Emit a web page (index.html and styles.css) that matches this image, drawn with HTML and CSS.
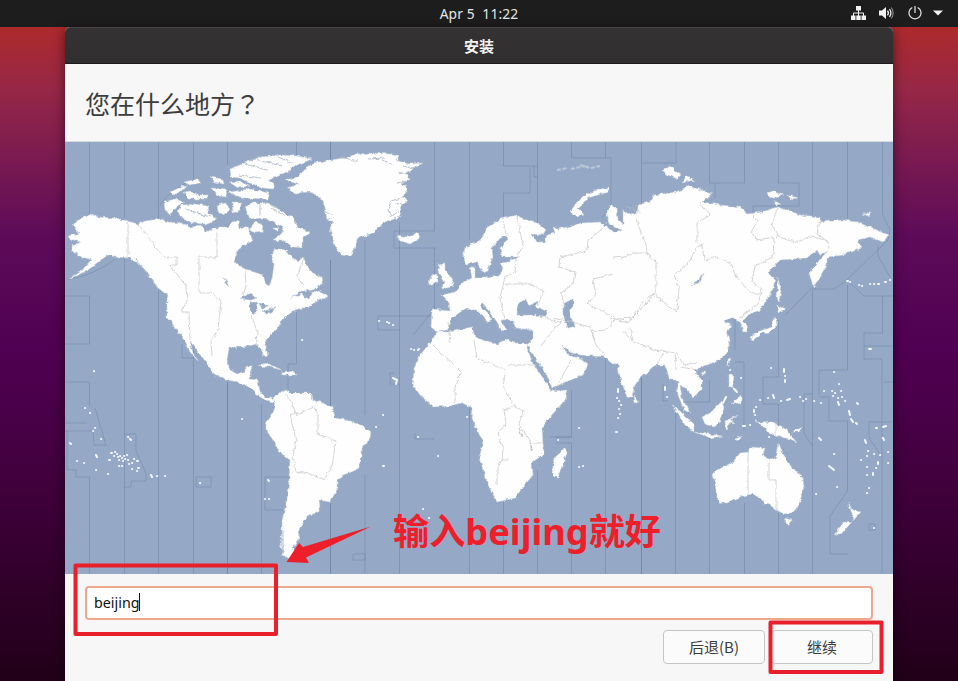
FILE: index.html
```html
<!DOCTYPE html>
<html lang="zh-CN">
<head>
<meta charset="utf-8">
<title>安装</title>
<link rel="stylesheet" href="styles.css">
</head>
<body>
<header class="topbar">
  <time class="clock">Apr 5&nbsp; 11:22</time>
  <div class="tray">
    <svg class="net" width="15" height="14" viewBox="0 0 15 14"><path fill="#f2f2f2" d="M5 0h5v4.500H5zM0 9.500h4.500V14H0zM5.300 9.500h4.400V14H5.300zM10.500 9.500H15V14h-4.500z"/><path fill="none" stroke="#f2f2f2" d="M7.500 4v6M2.500 10V7h10v3"/></svg>
    <svg class="vol" width="16" height="14" viewBox="0 0 16 14"><path fill="#f2f2f2" d="M0 4.500h3L7 1v12L3 9.500H0z"/><path fill="none" stroke="#f2f2f2" stroke-width="1.300" d="M8.500 4.700q1.800 2.300 0 4.600M10.500 3q2.800 4 0 8"/><path fill="none" stroke="#9d9d9d" d="M12.400 1.500q3.400 5.500 0 11"/></svg>
    <svg class="pow" width="14" height="14" viewBox="0 0 14 14"><path fill="none" stroke="#e8e8e8" stroke-width="1.200" d="M4.300 1.500a6 6 0 1 0 5.400 0M7 0v7"/></svg>
    <svg class="caret" width="10" height="6" viewBox="0 0 10 6"><path fill="#f2f2f2" d="M0 .5h10L5 5.500z"/></svg>
  </div>
</header>
<main class="window">
  <div class="titlebar">安装</div>
  <h1 class="heading">您在什么地方<span class="mark" lang="zh-TW">？</span></h1>
  <svg class="map" viewBox="65 142 828 432">
    <defs>
      <filter id="coast" x="-5%" y="-5%" width="110%" height="110%" color-interpolation-filters="sRGB">
        <feTurbulence type="fractalNoise" baseFrequency=".2" numOctaves="3" seed="4"/>
        <feDisplacementMap in="SourceGraphic" scale="4" xChannelSelector="R" yChannelSelector="G"/>
        <feGaussianBlur stdDeviation=".35"/>
      </filter>
    </defs>
    <path class="zones" d="M89.500 142V214M124.500 142V218M158.500 142V220M193.500 142V180M227.500 142V165M89.500 296V344M65 296H89.500M65 344H89.500M65 382H89.500V406M65 423H87M65 431H93L94 445H106L95 408M67 431V470H76V477H89.500V574M124.500 259V574M124.500 434H136V451L146 473V481H131V487H124.500M158.500 290V574M193.500 350V574M227.500 382V574M261.500 404V574M196 477H211V487H196ZM296.500 142V155M296.500 312V364H288V389M330.500 142V160M330.500 260V574M365 240V415M365 475V574M399.500 222V574M434.500 142V231H394V248H434.500V309L413 335M434.500 316H378V330H400M469.500 142V240M469.500 406V574M503.500 142V166H537.500V142M530 168V193H503.500V218M537.500 166V223M534 166V177H537.500M571.500 142V158H611V205L602 218M605.500 158V142M641.500 142V163H676V142M641.500 163V205M709.500 142V183H744.500V142M715 183V198M778.500 142V183H799V206H753V212M812.500 142V215M847.500 142V219M882.500 142V214L890 230L888 240L847 280L834 289H813M847 280L864 296H893M878 245L878 256L890 277M813 287L785 315M812.500 289V574M847.500 285V370H819V395M882.500 296V333H864V359H882V574M864 346H893M884 382H893M503.500 502V574M537.500 470V574M571.500 390V437H555M555 443H571.500V574M605.500 357V574M641.500 378V574M675.500 412V574M709.500 380V402H685M709.500 435V574M744.500 503V574M735 318V350M735 362H744V430M778.500 320V377H763V404H778.500V432M778.500 513V574M804 394V434L813 446M804 394H813M819 397H829V421H847.500V491L830 516V554H848M869 422H892M869 422V438L880 454M415 433V439H434.500M550 437H571.500M663 384V401H668M182 344V358H193M289 477H265V510H283M394 373H390V384H399M353 554H365V560H353ZM869 524H875V530H869ZM160 205Q172 186 198 179M67 280Q97 274 115 259"/>
    <path class="zones" d="M330.500 142V160M330.500 260V574M227.500 382V574M641.500 378V574"/>
    <g filter="url(#coast)">
      <path class="land" d="M72 225L82 218 92 214 98 217 115 218 128 221 138 224 145 221 160 219 168 222 182 223 190 227 202 226 205 232 215 228 228 228 232 222 238 220 239 228 248 226 250 235 254 241 247 243 238 250 234 262 243 268 257 273 263 275 266 284 269 286 272 278 274 265 272 255 275 248 285 250 292 257 298 262 303 257 308 268 313 273 322 277 323 283 313 290 302 291 290 298 302 294 306 299 310 293 320 290 329 298 320 299 314 302 311 307 302 308 292 311 288 315 282 320 278 328 273 333 266 340 265 345 268 355 264 357 261 348 257 344 248 346 240 347 229 348 227 360 230 370 237 374 243 372 247 367 253 367 250 375 249 379 258 380 260 392 265 397 272 397 276 400 272 403 265 400 257 395 250 387 238 382 227 380 212 373 210 367 198 352 190 341 193 353 199 362 190 352 184 340 175 327 167 317 167 300 168 296 157 287 148 273 142 267 130 258 115 257 108 255 98 262 88 270 78 275 68 279 84 269 92 260 82 257 73 252 72 246 81 242 70 239 68 236 80 233Z
      M285 180L297 177 308 167 313 163 330 160 345 158 357 154 373 153 390 154 400 157 397 161 410 164 423 163 413 168 407 173 410 180 402 183 408 190 402 197 408 199 402 205 400 215 397 218 383 223 373 233 358 238 353 252 350 257 342 255 336 248 332 237 330 228 333 222 327 220 325 207 320 197 310 192 295 193 288 188 298 184Z
      M230 169L247 162 260 157 280 155 297 156 312 159 297 165 287 172 273 177 268 181 274 184 273 189 263 188 250 183 240 178 231 177Z
      M229 192L250 189 269 193 267 199 240 198ZM245 207L253 203 268 203 280 210 293 218 298 227 310 232 303 238 303 248 293 247 283 240 273 240 280 235 284 228 273 222 263 218 250 219Z
      M177 212L182 205 195 204 208 206 209 213 217 219 205 224 192 223 183 219ZM164 202L175 199 184 202 176 207 170 215 165 210ZM184 192L190 191 197 195 208 195 207 199 188 199ZM171 192L182 186 186 188 174 195ZM184 182L198 179 200 183 189 185ZM217 205L227 203 230 210 223 215 218 211ZM232 202L242 202 240 210 233 213ZM211 188L227 189 226 197 218 196ZM210 177L223 179 224 184 214 182ZM229 182L239 181 249 186 238 188ZM255 222L263 225 262 232 255 233 249 229ZM273 227L279 227 277 232Z
      M273 399L280 392 287 390 291 393 310 393 313 400 323 403 333 408 335 418 347 420 363 426 371 432 370 438 362 448 362 457 357 470 343 475 338 480 338 488 330 502 319 500 320 507 317 513 308 515 303 523 298 532 300 538 293 547 295 553 290 559 283 555 280 543 282 533 282 520 287 500 289 480 290 460 280 452 273 440 266 430 266 423 272 415 275 407Z
      M430 343L437 332 448 332 472 327 475 337 490 343 498 344 507 339 517 343 528 343 527 348 533 363 543 378 551 391 568 390 565 400 550 417 542 428 543 443 544 453 532 463 533 475 523 487 515 498 497 502 488 485 483 470 479 458 483 443 475 425 472 418 473 408 462 403 450 406 433 407 420 395 413 385 414 368 420 355ZM565 447L567 452 558 477 553 477 552 472 554 458 560 453Z
      M432 309L450 311 449 302 442 295 455 292 462 283 472 278 470 268 475 266 475 277 485 277 500 275 503 268 500 263 507 262 519 257 502 257 500 248 508 239 502 236 492 248 493 257 488 270 482 272 477 262 467 264 463 257 465 248 480 240 488 227 500 219 517 215 525 220 537 223 546 229 543 235 532 234 537 242 545 242 547 235 555 233 553 227 558 229 567 227 582 223 600 222 608 228 615 233 622 230 610 225 606 215 610 205 617 208 618 220 623 225 623 210 628 213 637 214 638 205 650 202 653 195 677 192 688 186 712 193 703 202 720 205 740 207 748 214 762 212 777 207 793 212 800 215 820 217 820 222 843 220 857 222 877 230 889 235 883 242 870 237 858 240 862 248 843 255 827 257 827 265 820 278 813 287 809 273 818 262 828 250 820 255 817 250 807 258 780 260 767 273 775 278 773 290 760 310 748 315 743 321 747 325 748 332 743 333 741 323 733 317 723 322 732 325 727 332 730 340 727 353 720 360 702 367 693 370 702 380 702 390 693 397 685 388 680 385 682 398 690 413 684 410 678 395 677 380 670 380 665 365 655 365 640 378 635 385 632 397 628 399 620 378 618 365 610 362 605 357 580 355 572 353 562 345 568 355 575 357 582 360 588 365 583 375 552 388 548 378 537 360 530 350 528 344 533 339 533 330 515 328 513 320 500 320 507 330 502 331 497 322 483 303 480 306 492 318 488 323 485 318 475 310 465 309 453 317 447 330 437 332 431 327Z
      M438 265L445 263 445 270 450 277 454 283 452 287 441 289 445 282 440 275ZM430 278L437 273 437 282 429 285ZM397 235L407 237 417 233 420 238 410 244 400 241ZM608 188L593 190 577 202 570 212 577 217 584 215 578 208 588 198 608 192ZM662 170L670 166 675 171 681 175 677 179 668 175ZM681 183L687 176 694 180ZM767 193L773 191 783 195 770 198ZM787 195L798 198 790 199ZM773 201L781 204 776 205ZM862 214L871 213 869 216Z
      M778 278L781 290 779 302 777 298ZM777 305L786 309 778 314ZM775 317L777 325 770 332 762 333 752 341 750 337 760 331 771 327ZM728 359L731 358 728 366ZM701 373L705 371 704 375ZM634 395L639 402 635 403ZM729 374L733 376 732 386 738 390 729 386ZM732 403L741 396 741 404 736 403ZM702 417L710 413 722 401 724 408 720 420 715 427 705 424ZM671 404L682 413 694 424 694 432 685 425ZM695 432L723 436 710 438ZM735 439L743 436 738 441ZM725 421L738 415 730 420 734 424 729 423 728 429 726 430ZM755 420L763 423 773 422 787 430 797 443 788 439 780 436 770 434 765 428ZM791 432L802 427 799 432Z
      M713 473L723 467 733 462 740 453 748 452 750 447 765 448 763 455 773 460 777 455 779 443 783 455 792 467 803 478 804 487 797 510 785 514 775 510 768 502 765 505 763 500 753 494 743 496 733 500 720 504 717 498 717 490ZM784 518L792 520 788 527ZM848 502L853 510 861 512 853 521 852 514ZM848 520L851 523 842 533 834 535 840 527ZM257 366L267 363 282 370 270 367ZM281 373L294 371 297 375 284 375Z"/>
      <path class="sea" d="M518 303L526 300 529 306 538 301 536 306 547 312 546 316 533 315 517 315ZM563 304L573 299 573 306 569 311 575 326 567 328 563 313ZM704 273L700 282 691 286 699 280ZM241 299L248 293 257 298 251 300ZM250 303L258 301 257 310 253 315 250 310ZM259 303L268 305 262 310ZM262 312L276 307 268 314ZM224 277L229 287 226 284ZM307 289L312 293 310 299 304 295Z"/>
      <path class="borders" d="M128 221V258M138 224L148 236 155 247 164 257H176V265H170L186 286 187 301 181 312H189L190 340M217 231V257H199V293H212L221 301 218 329 211 341 212 356M245 270L246 285 243 296M251 315L257 330 256 345M304 257L297 277 303 285M283 391L290 400 297 415 314 407 318 414 318 434 336 441 332 466 324 480 311 474 296 472 293 455 296 440 290 415 299 412M433 345L461 372 455 386 455 404M474 340L477 358 506 370 503 386 515 406 504 410 506 424 498 433 503 448 502 460 497 468V486M507 365H537M515 406L523 411 519 425 530 440 531 450M530 443H543M502 460H509M448 322L450 343M503 221L507 237M517 216L523 246 516 258 515 272 506 277M505 276L500 298 504 320M505 284L530 284 544 291 538 305M608 221L602 229 588 240 587 251 560 257 559 267 575 272 573 284 561 293 565 307M553 318L575 323 590 327 594 340M561 323L553 330 541 346M613 258L625 257 633 253H648L656 262 656 292 645 300 632 318 617 319 587 303 596 296 593 279 613 274M615 320L606 330 592 331 596 345 605 355M630 328L633 341 655 350 676 353 684 365 697 362M622 331L631 338M610 318L628 322 638 312 654 294 670 307 677 311 679 288 674 276 690 261 696 248 702 244 704 260 718 257 730 263 736 276 750 293 760 294M636 220L646 244 647 254 655 261M699 202L710 215 697 223 697 243M752 213L757 222 751 232 757 240 774 237 773 257 755 266 752 282 762 289 758 304 739 318M777 208L772 225 778 237 796 242 810 236 828 241 829 249M820 221L817 234 827 240M748 452V495M769 459V480H776V510M776 422V435M554 392L571 360M636 205L640 214M663 353L656 367M675 355L677 370M680 367L698 370M540 316L562 323"/>
      <path class="fjords" d="M245 164l22 6M250 158l32 8M273 155l20 8M239 175l22 3M340 157l18 4M368 159l17-1M381 160l13 4M402 166l12 2M399 174l11-2M397 183l9-2M401 198l-10 3-3 9 7 8M395 204l10-1M389 217l10-5M325 211l7 4M326 220l8-3M260 204v12M272 208l14 9M186 209l15 5M210 217l-13-4M135 259l12 14M147 273l11 16M283 531v23M281 538l2 15M702 202l10-7M636 211l-10-5M519 427l3 10M530 443l2 7"/>
    </g>
    <path class="franz" d="M557 170l11-2M571 169l14-3M580 165l10 3M591 168l9-2"/>
    <path class="islands" d="M379 321h.2M387 322h.2M389 323h.2M393 325h.2M411 349h.2M414 350h.2M419 349l-1 1M393 378l4 2-1 4M302 340h.2M94 371v.2M85 408h.2M90 413h.2M95 428h.2M93 431h.2M101 439h.2M70 443l1 1M77 461h.2M84 463h.2M96 455l1 2M96 470h.2M108 474h.2M128 437h.2M130 439l1 1M111 453h1M115 452h.2M117 454h.2M114 456h.2M118 457h.2M120 456h.2M122 458h.2M119 460h.2M124 456h.2M125 459h.2M127 455h.2M128 460h.2M123 461h.2M129 464h.2M134 459h.2M132 463h.2M132 469h.2M119 466h.2M122 466h.2M109 460h1M137 461h1M138 468h1M137 471h.2M151 475l1 2M157 476h.2M165 476h.2M200 483h.2M242 419h.2M265 499h.2M269 499h.2M268 480l1 1M383 415h.2M376 427h.2M383 466h1M418 437h.2M438 456h.2M423 509h.2M429 518h.2M467 417h.2M558 440h.2M579 428h.2M579 467h.2M583 466h.2M616 432h1M618 389v3M617 398h.2M619 401h.2M621 405h.2M619 409h.2M620 414h.2M618 418h.2M665 387v3M667 397h.2M730 370h.2M734 389l3 3M726 397l-3 6M771 368h.2M784 369v3M785 376h.2M785 380v2M760 400h.2M768 398h.2M773 395l1 3M781 401h.2M787 400l3-1M800 397h.2M803 401h.2M806 399h.2M814 401h.2M821 403h.2M834 372h.2M839 384h.2M824 391h.2M832 391h.2M833 396h.2M835 393h.2M838 398h.2M841 391h.2M838 402l1 3M842 397h.2M845 401h.2M857 403l1 1M849 411l1 4M851 419l2 3M856 423l1 1M876 428h1M883 427l3-1M865 440l1 3M868 451h.2M861 460h.2M867 456h.2M874 454h.2M880 455h.2M878 462v2M876 468h.2M873 473v2M867 467h.2M867 475h.2M883 438l1 2M888 452h.2M888 463h.2M869 488h.2M867 493h.2M816 494h.2M837 487h.2M829 466l5 4M834 454h.2M819 438l2 2M869 349h2M874 528h.2M847 281h1M850 282h.2M859 285h.2M862 286h.2M870 284h.2M874 284h.2M878 284h1M885 282h1M890 280h.2M754 410v2M756 407h.2M755 415h.2M743 426h2M750 425h.2M769 437h.2M741 378h.2"/>
  </svg>
  <div class="form">
    <div class="entry"><span>beijing</span><i class="cursor"></i></div>
    <div class="actions"><button class="btn">后退(B)</button><button class="btn">继续</button></div>
  </div>
</main>
<svg class="notes" width="958" height="681" viewBox="0 0 958 681">
  <g fill="none" stroke="#e8202b" stroke-width="4" stroke-linejoin="round"><path d="M75.500 565.500H276V634H75.500ZM770.500 622.500H881.500V672H770.500Z"/></g>
  <path fill="#ec1f2b" d="M371 526.500L303 547 299 543 286.500 562 309 563 306 557.500Z"/>
  <text x="393" y="545" textLength="268" lengthAdjust="spacingAndGlyphs">输入beijing就好</text>
</svg>
</body>
</html>
```
FILE: styles.css
```css
* { box-sizing: border-box; }
body {
  margin: 0;
  height: 681px;
  overflow: hidden;
  font-family: "Noto Sans", "Noto Sans CJK SC", sans-serif;
  background: linear-gradient(#ad2a2c 27px, #962747 90px, #7b1b50 155px, #5d0b59 235px, #500052 350px, #41003d 480px, #210018 681px);
}
.topbar {
  display: grid;
  grid-template-columns: 1fr auto 1fr;
  align-items: center;
  height: 27px;
  background: #1d1d1d;
  color: #e6e6e6;
}
.clock { grid-column: 2; font-size: 13.8px; line-height: 25px; padding-bottom: 1px; letter-spacing: .15px; }
.tray {
  justify-self: end;
  display: flex;
  align-items: center;
  gap: 13px;
  padding: 0 15px 1px 0;
}
.tray svg { display: block; }
.caret { margin-left: -2px; }
.window {
  width: 828px;
  height: 654px;
  margin: 0 auto;
  background: #f7f7f7;
  border-radius: 5px 5px 0 0;
  box-shadow: 0 2px 12px #0008;
  color: #3d3d3d;
}
.titlebar {
  height: 37px;
  border-radius: 5px 5px 0 0;
  background: linear-gradient(#343232, #302e2e);
  border-top: 1px solid #474545;
  border-bottom: 1px solid #1d1c1c;
  color: #f4f4f4;
  font: bold 15px/36px "Noto Sans CJK SC", sans-serif;
  text-align: center;
}
.heading {
  margin: 0;
  height: 78px;
  padding: 1px 20px 0;
  border-bottom: 1px solid #d7d9dd;
  font: 400 25px/77px "Noto Sans CJK SC", sans-serif;
}
.mark { font-family: "Noto Sans CJK TC", sans-serif; }
.map { display: block; width: 828px; height: 432px; background: #95a9c7; }
.zones { fill: none; stroke: #50688c; stroke-width: .8; opacity: .36; }
.land { fill: #fefefe; stroke: #cbd3d8; stroke-width: .5; }
.sea { fill: #95a9c7; stroke: #b1bdca; stroke-width: .5; }
.borders { fill: none; stroke: #c9c9c9; stroke-width: .8; }
.fjords { fill: none; stroke: #b0bcc8; stroke-width: .9; }
.franz { fill: none; stroke: #b9c9d6; stroke-width: 2; stroke-dasharray: 4 1.5; }
.islands { fill: none; stroke: #f4f8fa; stroke-width: 2; stroke-linecap: round; }
.form { padding: 12px 20px 0; }
.entry {
  display: flex;
  align-items: center;
  height: 34px;
  padding: 0 7px 2px;
  border: 2px solid #eda88d;
  border-radius: 4px;
  background: #fff;
  color: #111;
  font-size: 14.300px;
}
.cursor { width: 1px; height: 18px; margin-left: -1px; background: #111; }
.actions { display: flex; justify-content: flex-end; gap: 6px; margin-top: 10px; }
.btn {
  width: 102px;
  height: 34px;
  padding: 0 0 2px;
  border: 1px solid #c6c6c6;
  border-radius: 4px;
  background: #fbfbfb;
  color: #3d3d3d;
  font: 15px "Noto Sans CJK SC", sans-serif;
}
.notes { position: absolute; left: 0; top: 0; pointer-events: none; }
.notes text { fill: #ec1f2b; font: bold 36px "Noto Sans", "Noto Sans CJK SC", sans-serif; }
```
